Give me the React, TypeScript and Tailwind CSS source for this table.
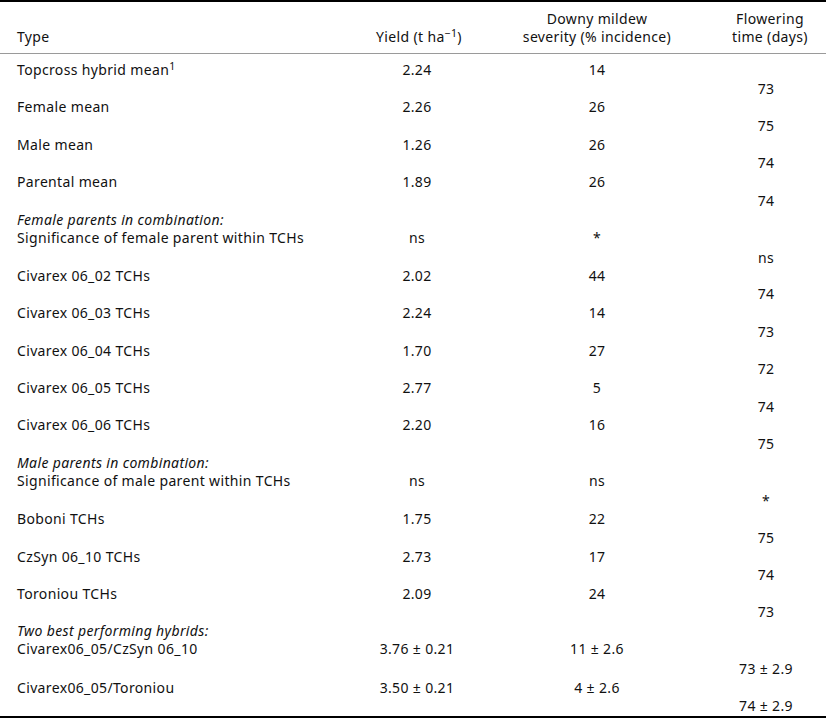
import React from 'react'

type Row = {
  label: string
  group?: string // italic line above the label
  sup?: string
  yieldV: string
  downy: string
  flower: string
}

const ROWS: Row[] = [
  { label: 'Topcross hybrid mean', sup: '1', yieldV: '2.24', downy: '14', flower: '73' },
  { label: 'Female mean', yieldV: '2.26', downy: '26', flower: '75' },
  { label: 'Male mean', yieldV: '1.26', downy: '26', flower: '74' },
  { label: 'Parental mean', yieldV: '1.89', downy: '26', flower: '74' },
  {
    group: 'Female parents in combination:',
    label: 'Significance of female parent within TCHs',
    yieldV: 'ns',
    downy: '*',
    flower: 'ns',
  },
  { label: 'Civarex 06_02 TCHs', yieldV: '2.02', downy: '44', flower: '74' },
  { label: 'Civarex 06_03 TCHs', yieldV: '2.24', downy: '14', flower: '73' },
  { label: 'Civarex 06_04 TCHs', yieldV: '1.70', downy: '27', flower: '72' },
  { label: 'Civarex 06_05 TCHs', yieldV: '2.77', downy: '5', flower: '74' },
  { label: 'Civarex 06_06 TCHs', yieldV: '2.20', downy: '16', flower: '75' },
  {
    group: 'Male parents in combination:',
    label: 'Significance of male parent within TCHs',
    yieldV: 'ns',
    downy: 'ns',
    flower: '*',
  },
  { label: 'Boboni TCHs', yieldV: '1.75', downy: '22', flower: '75' },
  { label: 'CzSyn 06_10 TCHs', yieldV: '2.73', downy: '17', flower: '74' },
  { label: 'Toroniou TCHs', yieldV: '2.09', downy: '24', flower: '73' },
  {
    group: 'Two best performing hybrids:',
    label: 'Civarex06_05/CzSyn 06_10',
    yieldV: '3.76 ± 0.21',
    downy: '11 ± 2.6',
    flower: '73 ± 2.9',
  },
  { label: 'Civarex06_05/Toroniou', yieldV: '3.50 ± 0.21', downy: '4 ± 2.6', flower: '74 ± 2.9' },
]

const GRID = 'grid grid-cols-[334px_166px_194px_132px]'

function TableRow({ row }: { row: Row }) {
  const two = !!row.group
  return (
    <div className={`${GRID} items-start pt-[7px] ${two ? 'h-[56.3px]' : 'h-[37.4px]'}`}>
      <div className="pl-[17px]">
        {row.group && <div className="italic">{row.group}</div>}
        <div>
          {row.label}
          {row.sup && <sup>{row.sup}</sup>}
        </div>
      </div>
      <div className={`text-center ${two ? 'pt-[18px]' : ''}`}>{row.yieldV}</div>
      <div className={`text-center ${two ? 'pt-[18px]' : ''}`}>{row.downy}</div>
      {/* flowering values sit one line below the rest of the row */}
      <div className={`pl-[12px] text-center ${two ? 'pt-[38px]' : 'pt-[18.5px]'}`}>{row.flower}</div>
    </div>
  )
}

export default function App() {
  return (
    <div className="w-[826px] h-[724px] bg-white text-[#111] text-[14px] leading-[18px] tracking-[0.35px] font-['Noto_Sans',sans-serif]">
      <div className="border-t-2 border-black">
        {/* header */}
        <div className={`${GRID} items-end pt-[8px] pb-[7px] border-b border-[#9a9a9a]`}>
          <div className="pl-[17px]">Type</div>
          <div className="text-center pl-[4px]">
            Yield (t ha<sup>−1</sup>)
          </div>
          <div className="text-center">
            Downy mildew
            <br />
            severity (% incidence)
          </div>
          <div className="text-center pl-[20px]">
            Flowering
            <br />
            time (days)
          </div>
        </div>

        <div className="pb-[7px]">
          {ROWS.map((r, i) => (
            <TableRow key={i} row={r} />
          ))}
        </div>
      </div>
      <div className="border-t-2 border-black" />
    </div>
  )
}
